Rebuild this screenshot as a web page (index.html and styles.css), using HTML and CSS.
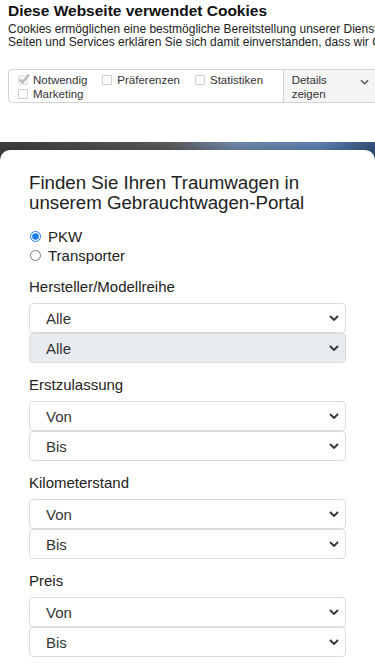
FILE: index.html
```html
<!DOCTYPE html>
<html lang="de">
<head>
    <meta charset="UTF-8">
    <meta name="viewport" content="width=device-width, initial-scale=1.0">
    <title>Gebrauchtwagen-Portal</title>
    <link rel="stylesheet" href="styles.css">
</head>
<body>
    <div class="cookie-banner">
        <h2 class="cookie-title">Diese Webseite verwendet Cookies</h2>
        <p class="cookie-text">Cookies ermöglichen eine bestmögliche Bereitstellung unserer Dienste. Mit der Nutzung unserer<br>Seiten und Services erklären Sie sich damit einverstanden, dass wir Cookies verwenden.</p>

        <div class="cookie-options">
            <div class="cookie-checks">
                <label class="check"><span class="box checked"><svg viewBox="0 0 12 12" width="12" height="12"><path d="M1.5 6.5 L4.5 9.5 L11 1.5" fill="none" stroke="#b5b5b5" stroke-width="2"/></svg></span>Notwendig</label>
                <label class="check"><span class="box"></span>Präferenzen</label>
                <label class="check"><span class="box"></span>Statistiken</label>
                <label class="check"><span class="box"></span>Marketing</label>
            </div>
            <div class="cookie-details">
                <span>Details<br>zeigen</span>
                <svg class="details-chevron" viewBox="0 0 10 6" width="9" height="6"><path d="M1 1 L5 5 L9 1" fill="none" stroke="#555" stroke-width="1.6"/></svg>
            </div>
        </div>
    </div>

    <div class="hero">
        <div class="search-card">
            <h1>Finden Sie Ihren Traumwagen in unserem Gebrauchtwagen-Portal</h1>

            <div class="radios">
                <label class="radio"><input type="radio" name="type" checked> PKW</label>
                <label class="radio"><input type="radio" name="type"> Transporter</label>
            </div>

            <div class="field">
                <label class="field-label">Hersteller/Modellreihe</label>
                <select><option>Alle</option></select>
                <select disabled><option>Alle</option></select>
            </div>

            <div class="field">
                <label class="field-label">Erstzulassung</label>
                <select><option>Von</option></select>
                <select><option>Bis</option></select>
            </div>

            <div class="field">
                <label class="field-label">Kilometerstand</label>
                <select><option>Von</option></select>
                <select><option>Bis</option></select>
            </div>

            <div class="field">
                <label class="field-label">Preis</label>
                <select><option>Von</option></select>
                <select><option>Bis</option></select>
            </div>
        </div>
    </div>
</body>
</html>
```

FILE: styles.css
```css
* {box-sizing: border-box;}
body {
    margin: 0;
    font-family: 'Liberation Sans', Arial, sans-serif;
    color: #222;
    background: white;
    overflow-x: hidden;
}

/* cookie banner */
.cookie-banner {
    height: 142px;
    padding: 3px 0 0 8px;
    background: white;
    overflow: hidden;
    white-space: nowrap;
}
.cookie-title {
    margin: 0;
    font-size: 15.5px;
    line-height: 16px;
    font-weight: bold;
    color: #111;
}
.cookie-text {
    margin: 4px 0 0;
    font-size: 12px;
    line-height: 13px;
    color: #222;
}
.cookie-options {
    display: flex;
    width: 420px;
    height: 34px;
    margin-top: 20px;
    border: 1px solid #d3d3d3;
    border-radius: 4px;
    overflow: hidden;
}
.cookie-checks {
    display: flex;
    flex-wrap: wrap;
    align-content: flex-start;
    width: 275px;
    padding: 3px 0 0 9px;
    font-size: 11.5px;
    line-height: 14px;
    color: #333;
}
.check {
    display: flex;
    align-items: center;
    gap: 5px;
    margin-right: 15px;
}
.box {
    position: relative;
    width: 10px;
    height: 10px;
    border: 1px solid #d0d0d0;
    border-radius: 1px;
    background: white;
}
.box.checked {border-color: #e6e6e6; background: #f3f3f3;}
.box svg {position: absolute; left: -1px; top: -3px;}
.cookie-details {
    display: flex;
    justify-content: space-between;
    width: 145px;
    padding: 3px 0 0 8px;
    background: #f5f5f5;
    border-left: 1px solid #d3d3d3;
    font-size: 11.5px;
    line-height: 14px;
    color: #333;
}
.details-chevron {margin: 6px 58px 0 0;}

/* hero + card */
.hero {
    padding-top: 8px;
    background: linear-gradient(to right, #3d3d3d 0%, #5a5a5a 45%, #6f87a8 62%, #5f82b0 85%, #33507a 100%);
}
.search-card {
    position: relative;
    background: white;
    border-radius: 10px 10px 0 0;
    padding: 23px 29px 20px;
    box-shadow: 0 -3px 6px rgba(0, 0, 0, 0.15);
}
h1 {
    margin: 0 0 14px;
    font-size: 18.7px;
    line-height: 20px;
    font-weight: normal;
    color: #222;
}
.radios {display: flex; flex-direction: column;}
.radio {
    display: flex;
    align-items: center;
    height: 19px;
    font-size: 15px;
    color: #222;
}
.radio input {
    margin: 0 7px 0 1px;
    width: 11px;
    height: 11px;
    accent-color: #1a7cf5;
}
.field {margin-top: 13px;}
.field-label {
    display: block;
    margin-bottom: 7px;
    font-size: 15px;
    line-height: 18px;
    color: #222;
}
select {
    display: block;
    width: 100%;
    height: 30px;
    padding: 0 16px;
    font-family: inherit;
    font-size: 15px;
    color: #333;
    background: white url("data:image/svg+xml;utf8,<svg xmlns='http://www.w3.org/2000/svg' width='10' height='6' viewBox='0 0 10 6'><path d='M1 1 L5 5 L9 1' fill='none' stroke='%23333' stroke-width='1.8'/></svg>") no-repeat right 6px center;
    border: 1px solid #d9dce0;
    border-radius: 4px;
    appearance: none;
    -webkit-appearance: none;
}
select:disabled {background-color: #e9ecef; color: #333; opacity: 1;}
```
